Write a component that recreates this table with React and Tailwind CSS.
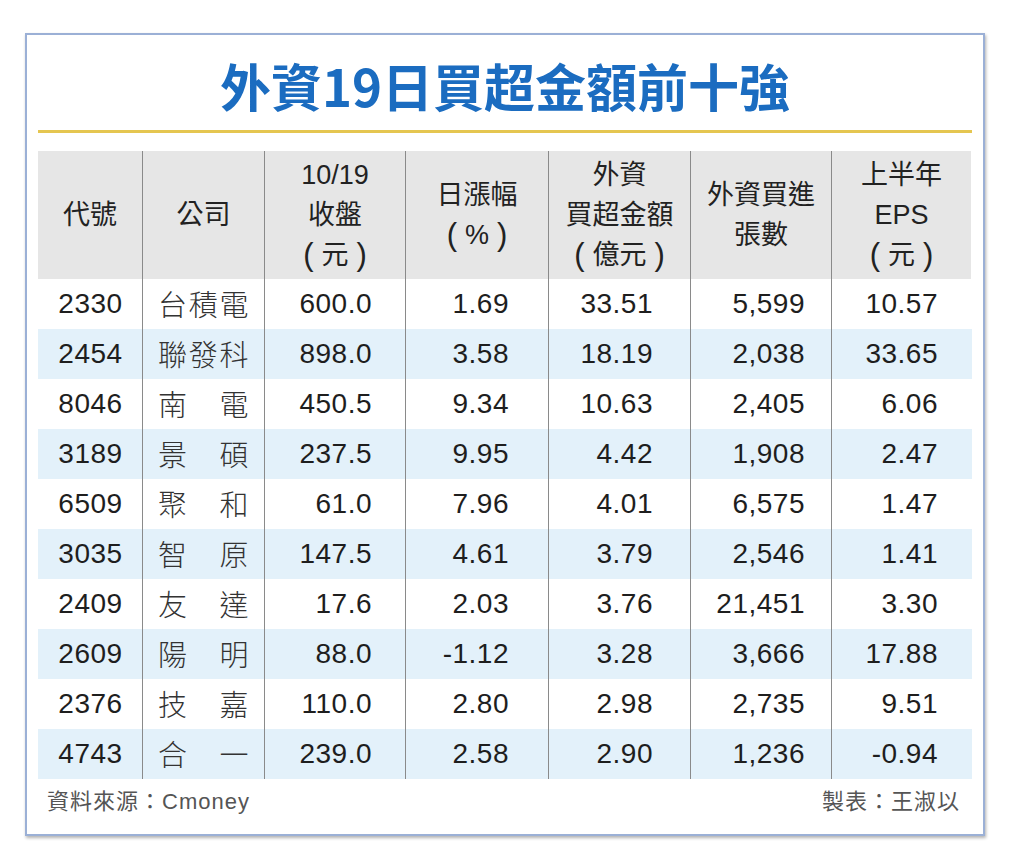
import React from "react";

const rows = [
  ["2330", ["台", "積", "電"], "600.0", "1.69", "33.51", "5,599", "10.57"],
  ["2454", ["聯", "發", "科"], "898.0", "3.58", "18.19", "2,038", "33.65"],
  ["8046", ["南", "電"], "450.5", "9.34", "10.63", "2,405", "6.06"],
  ["3189", ["景", "碩"], "237.5", "9.95", "4.42", "1,908", "2.47"],
  ["6509", ["聚", "和"], "61.0", "7.96", "4.01", "6,575", "1.47"],
  ["3035", ["智", "原"], "147.5", "4.61", "3.79", "2,546", "1.41"],
  ["2409", ["友", "達"], "17.6", "2.03", "3.76", "21,451", "3.30"],
  ["2609", ["陽", "明"], "88.0", "-1.12", "3.28", "3,666", "17.88"],
  ["2376", ["技", "嘉"], "110.0", "2.80", "2.98", "2,735", "9.51"],
  ["4743", ["合", "一"], "239.0", "2.58", "2.90", "1,236", "-0.94"],
];

const font = { fontFamily: '"Liberation Sans", Arial, "Noto Sans CJK TC", sans-serif' };
const cjk = { fontFamily: '"Noto Sans CJK TC", "Noto Sans CJK SC", sans-serif' };

function Paren({ children }) {
  return (
    <span className="inline-flex items-center">
      <span className="mr-[8px] font-light text-[31px] leading-[40px]">(</span>
      {children}
      <span className="ml-[8px] font-light text-[31px] leading-[40px]">)</span>
    </span>
  );
}

function HeadCell({ w, lines, first }) {
  return (
    <div
      className={`${w} h-[128px] bg-[#e6e6e6] flex flex-col items-center justify-center text-[27px] leading-[40px] text-[#222] ${first ? "" : "border-l border-[#8a8a8a]"}`}
      style={font}
    >
      {lines.map((l, i) => (
        <div key={i} className="whitespace-nowrap">{l}</div>
      ))}
    </div>
  );
}

export default function App() {
  return (
    <div className="w-[1024px] h-[866px] bg-white pt-[33px] pl-[25px]" style={font}>
      <div className="w-[960px] h-[803px] border-2 border-[#9bb0d6] bg-white px-[11px] shadow-[1px_2px_3px_rgba(0,0,0,0.3)] flex flex-col">
        <div className="h-[95px] pt-[6px] flex items-center justify-center">
          <div className="text-[51px] font-bold text-[#1b6cc0] leading-none" style={cjk}>
            外資19日買超金額前十強
          </div>
        </div>
        <div className="h-[3px] bg-[#e5c650]" />
        <div className="mt-[18px] flex flex-col">
          <div className="flex">
            <HeadCell w="w-[104px]" lines={["代號"]} first />
            <HeadCell w="w-[122px]" lines={["公司"]} />
            <HeadCell w="w-[141px]" lines={["10/19", "收盤", <Paren>元</Paren>]} />
            <HeadCell w="w-[143px]" lines={["日漲幅", <Paren>%</Paren>]} />
            <HeadCell w="w-[142px]" lines={["外資", "買超金額", <Paren>億元</Paren>]} />
            <HeadCell w="w-[141px]" lines={["外資買進", "張數"]} />
            <HeadCell w="w-[140px]" lines={["上半年", "EPS", <Paren>元</Paren>]} />
          </div>
          {rows.map((r, i) => (
            <div
              key={r[0]}
              className={`flex h-[50px] text-[28px] text-[#1e1e1e] tracking-[0.5px] ${i % 2 === 1 ? "bg-[#e3f1fa]" : "bg-white"}`}
            >
              <div className="w-[104px] flex items-center justify-center pl-[1px]">{r[0]}</div>
              <div className="w-[122px] border-l border-[#8a8a8a] flex items-center justify-between px-[15px] text-[29px] text-[#333]" style={cjk}>
                {r[1].map((c, j) => (
                  <span key={j} className="font-light">{c}</span>
                ))}
              </div>
              <div className="w-[141px] border-l border-[#8a8a8a] flex items-center justify-end pr-[33px]">{r[2]}</div>
              <div className="w-[143px] border-l border-[#8a8a8a] flex items-center justify-end pr-[39px]">{r[3]}</div>
              <div className="w-[142px] border-l border-[#8a8a8a] flex items-center justify-end pr-[37px]">{r[4]}</div>
              <div className="w-[141px] border-l border-[#8a8a8a] flex items-center justify-end pr-[26px]">{r[5]}</div>
              <div className="w-[140px] border-l border-[#8a8a8a] flex items-center justify-end pr-[33px]">{r[6]}</div>
            </div>
          ))}
        </div>
        <div className="h-[44px] flex items-center justify-between pl-[9px] pr-[12px] text-[22px] text-[#555] tracking-[1px]">
          <span>資料來源：Cmoney</span>
          <span>製表：王淑以</span>
        </div>
      </div>
    </div>
  );
}
